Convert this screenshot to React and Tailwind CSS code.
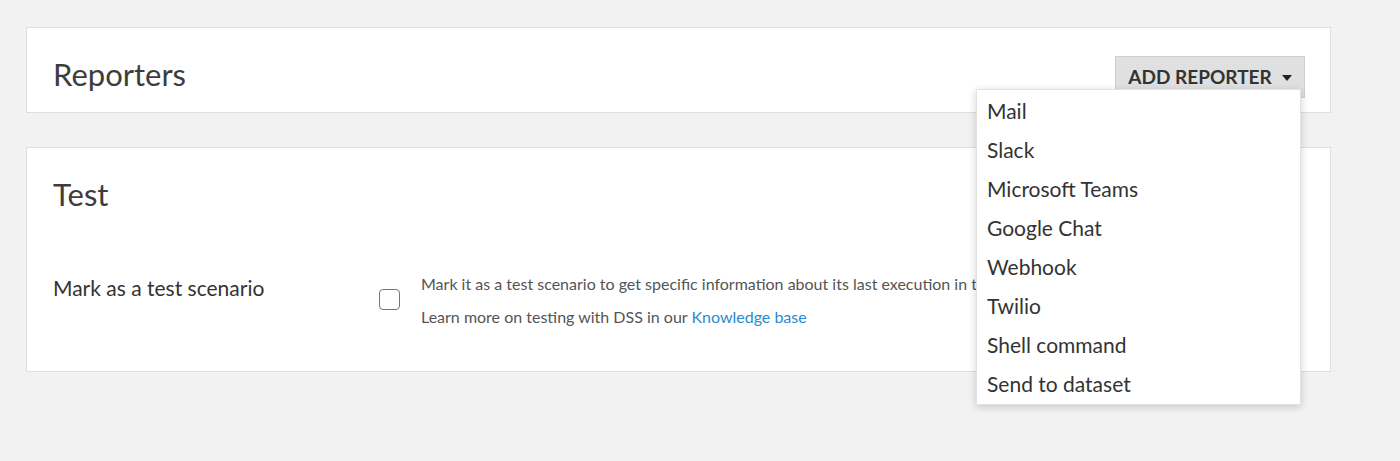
import React from "react"

const reporters = [
  "Mail",
  "Slack",
  "Microsoft Teams",
  "Google Chat",
  "Webhook",
  "Twilio",
  "Shell command",
  "Send to dataset"
]

function AddReporterMenu() {
  return (
    <div className="relative mt-[28px]">
      <button className="flex h-[42px] w-[190px] items-center justify-center gap-[10px] border border-[#cfcfcf] bg-[#e0e0e0] text-[19px] font-bold uppercase text-[#333]">
        Add reporter
        <span className="mt-[1px] h-0 w-0 border-x-[5px] border-t-[6px] border-x-transparent border-t-[#222]" />
      </button>

      {/* open menu */}
      <div className="absolute right-[4px] top-[33px] z-10 w-[325px] border border-[#e3e3e3] bg-white py-[1px] shadow-[0_2px_8px_rgba(0,0,0,0.18)]">
        {reporters.map(name => (
          <div
            key={name}
            className="flex h-[39px] items-center px-[10px] text-[21px] text-[#333]"
          >
            {name}
          </div>
        ))}
      </div>
    </div>
  )
}

export default function App() {
  return (
    <div className="min-h-[461px] bg-[#f2f2f2] pl-[26px] pr-[69px] pt-[27px] font-['Source_Sans_Pro','Lato',sans-serif]">

      {/* Reporters */}
      <div className="flex h-[86px] items-start justify-between border border-[#dedede] bg-white pl-[26px] pr-[25px]">
        <h2 className="mt-[27px] text-[31px] leading-[38px] text-[#3d3d3d]">Reporters</h2>
        <AddReporterMenu />
      </div>

      {/* Test */}
      <div className="mt-[34px] h-[225px] border border-[#dedede] bg-white px-[26px]">
        <h2 className="mt-[27px] text-[31px] leading-[38px] text-[#3d3d3d]">Test</h2>

        <div className="mt-[57px] flex items-start">
          <div className="w-[326px] pt-[5px] text-[21px] leading-[26px] text-[#333]">
            Mark as a test scenario
          </div>
          <div className="mt-[19px] h-[21px] w-[21px] shrink-0 rounded-[4px] border-[1.5px] border-[#777] bg-white" />
          <div className="ml-[21px] whitespace-nowrap text-[16px] text-[#555]">
            <p className="mt-[3px] leading-[22px]">
              Mark it as a test scenario to get specific information about its last execution in the outcome reports.
            </p>
            <p className="mt-[11px] leading-[22px]">
              Learn more on testing with DSS in our{" "}
              <a className="text-[#2a8bd0]">Knowledge base</a>
            </p>
          </div>
        </div>
      </div>

    </div>
  )
}
